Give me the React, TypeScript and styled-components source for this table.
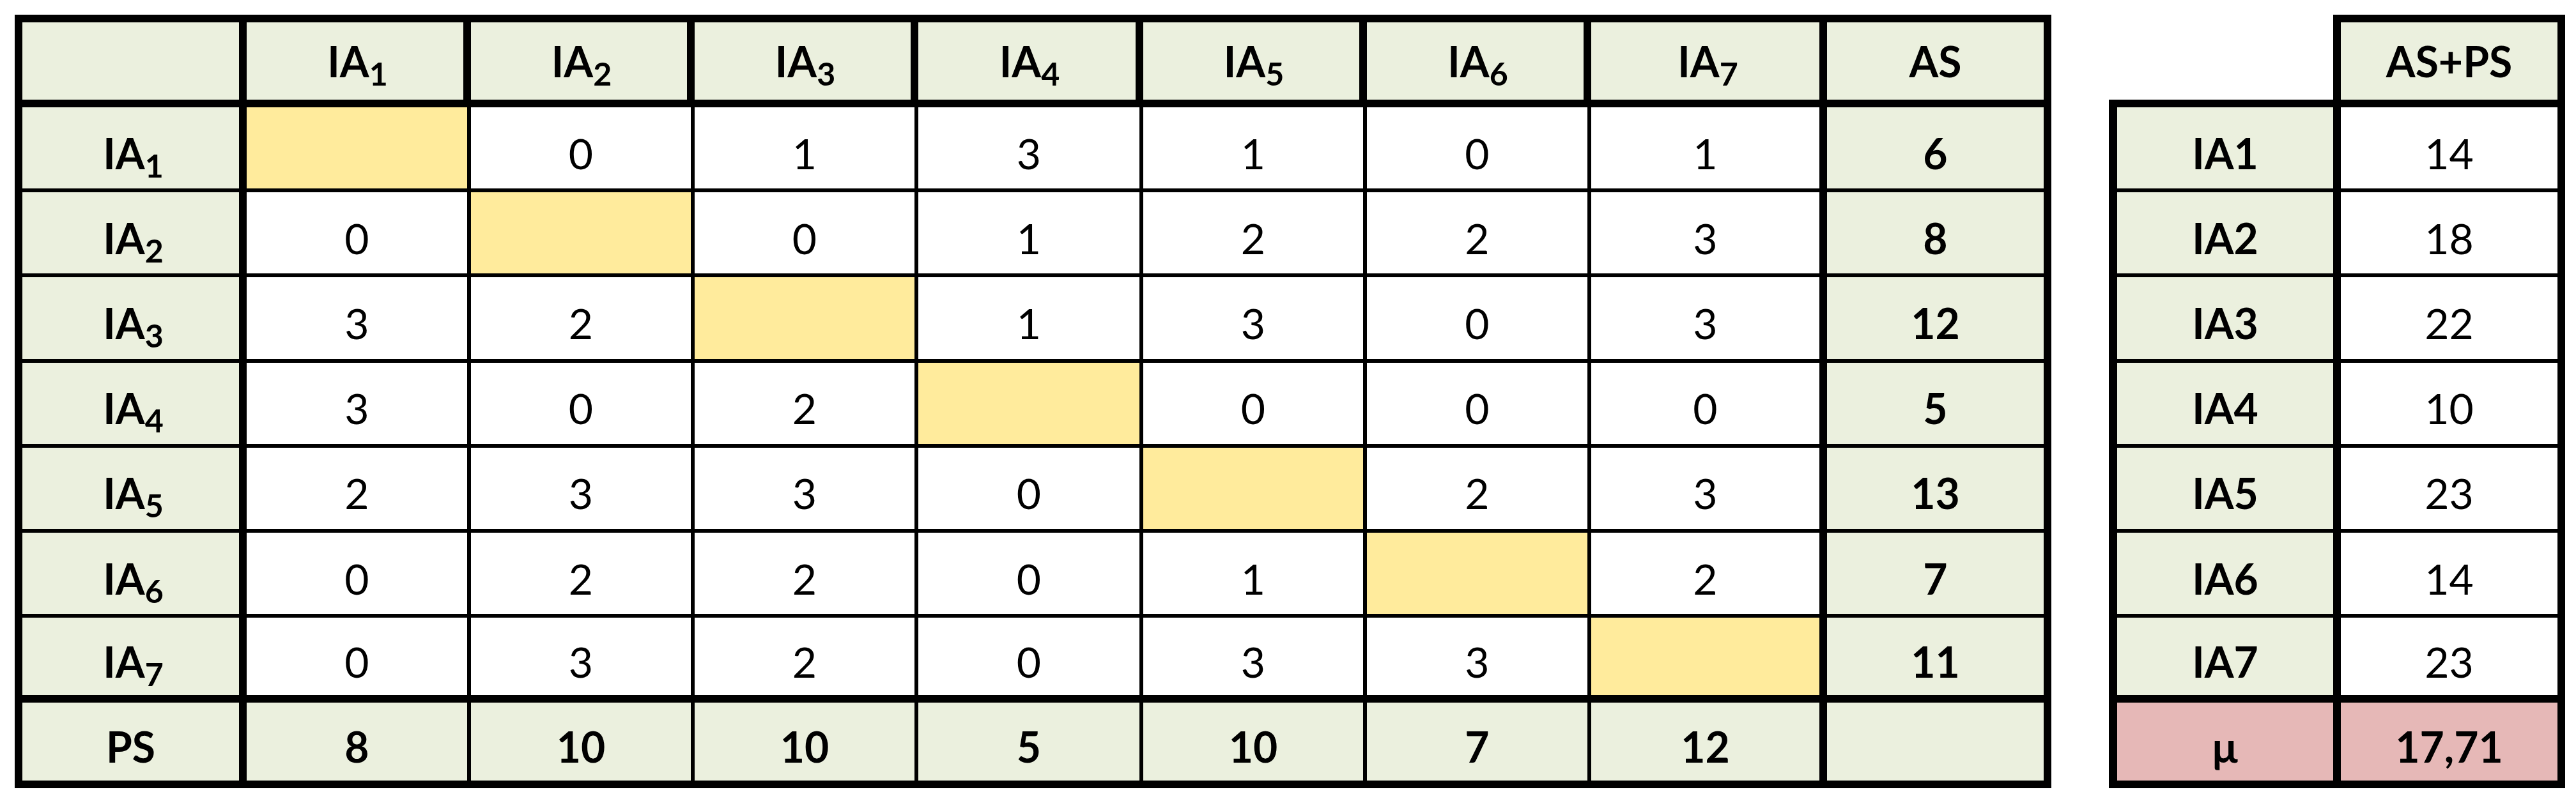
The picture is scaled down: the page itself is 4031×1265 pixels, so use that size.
import React from 'react';
import styled, { createGlobalStyle } from 'styled-components';

const GlobalStyle = createGlobalStyle`
  html, body {
    margin: 0;
    padding: 0;
    background: #ffffff;
  }
  body {
    font-family: Lato, "Liberation Sans", sans-serif;
    color: #000000;
  }
`;

type Tone = 'head' | 'plain' | 'diag' | 'mean' | 'blank';

const toneColor: Record<Tone, string> = {
  head: '#EBF0DE',
  plain: '#FFFFFF',
  diag: '#FFEB9C',
  mean: '#E6B8B7',
  blank: '#FFFFFF',
};

const THICK = 12;
const THIN = 6;

interface CellProps {
  $tone: Tone;
  $bold?: boolean;
  $head?: boolean;
  $t?: number;
  $r?: number;
  $b?: number;
  $l?: number;
}

const Page = styled.div`
  display: flex;
  align-items: flex-start;
  gap: 90px;
  padding: 23px 0 0 23px;
`;

const Sheet = styled.div`
  display: grid;
  grid-template-columns: 363px 351px 350px 350px 352px 350px 351px 369px 351px;
  grid-template-rows: 145px repeat(8, 133.2px);
`;

const Summary = styled.div`
  display: grid;
  grid-template-columns: 363px 351px;
  grid-template-rows: 145px repeat(8, 133.2px);
`;

const Cell = styled.div<CellProps>`
  display: flex;
  align-items: center;
  justify-content: center;
  box-sizing: border-box;
  background: ${p => toneColor[p.$tone]};
  border-style: solid;
  border-color: #000000;
  border-width: ${p => `${p.$t ?? 0}px ${p.$r ?? 0}px ${p.$b ?? 0}px ${p.$l ?? 0}px`};
  padding-top: ${p => (p.$head ? 0 : 16)}px;
  font-size: 66px;
  line-height: 1;
  font-weight: ${p => (p.$bold ? 700 : 400)};
  white-space: nowrap;
`;

// keeps "IA" and its index in one inline run so the index can drop below
const Label = styled.span`
  display: inline-block;
  line-height: 1;
  padding-left: 8px;
`;

const Sub = styled.span`
  font-size: 0.76em;
  line-height: 0;
  vertical-align: -13px;
`;

const Agent = ({ n }: { n: number }) => (
  <Label>
    IA<Sub>{n}</Sub>
  </Label>
);

// influence matrix, null = diagonal
const matrix: (number | null)[][] = [
  [null, 0, 1, 3, 1, 0, 1],
  [0, null, 0, 1, 2, 2, 3],
  [3, 2, null, 1, 3, 0, 3],
  [3, 0, 2, null, 0, 0, 0],
  [2, 3, 3, 0, null, 2, 3],
  [0, 2, 2, 0, 1, null, 2],
  [0, 3, 2, 0, 3, 3, null],
];

const active = [6, 8, 12, 5, 13, 7, 11];
const passive = [8, 10, 10, 5, 10, 7, 12];
const totals = [14, 18, 22, 10, 23, 14, 23];

const App: React.FC = () => {
  const last = matrix.length - 1;

  return (
    <>
      <GlobalStyle />
      <Page>
        <Sheet>
          <Cell $tone="head" $head $t={THICK} $l={THICK} $r={THICK} $b={THICK} />
          {matrix.map((_, c) => (
            <Cell key={`h${c}`} $tone="head" $head $bold $t={THICK} $r={THICK} $b={THICK}>
              <Agent n={c + 1} />
            </Cell>
          ))}
          <Cell $tone="head" $head $bold $t={THICK} $r={THICK} $b={THICK}>
            AS
          </Cell>

          {matrix.map((row, r) => {
            const b = r === last ? THICK : THIN;
            return (
              <React.Fragment key={`r${r}`}>
                <Cell $tone="head" $bold $l={THICK} $r={THICK} $b={b}>
                  <Agent n={r + 1} />
                </Cell>
                {row.map((v, c) => (
                  <Cell
                    key={c}
                    $tone={v === null ? 'diag' : 'plain'}
                    $r={c === last ? THICK : THIN}
                    $b={b}
                  >
                    {v}
                  </Cell>
                ))}
                <Cell $tone="head" $bold $r={THICK} $b={b}>
                  {active[r]}
                </Cell>
              </React.Fragment>
            );
          })}

          <Cell $tone="head" $bold $l={THICK} $r={THICK} $b={THICK}>
            PS
          </Cell>
          {passive.map((v, c) => (
            <Cell key={`p${c}`} $tone="head" $bold $r={c === last ? THICK : THIN} $b={THICK}>
              {v}
            </Cell>
          ))}
          <Cell $tone="head" $r={THICK} $b={THICK} />
        </Sheet>

        <Summary>
          <Cell $tone="blank" $head $r={THICK} $b={THICK} />
          <Cell $tone="head" $head $bold $t={THICK} $r={THICK} $b={THICK}>
            AS+PS
          </Cell>
          {totals.map((v, i) => {
            const b = i === totals.length - 1 ? THICK : THIN;
            return (
              <React.Fragment key={`t${i}`}>
                <Cell $tone="head" $bold $l={13} $r={THICK} $b={b}>
                  IA{i + 1}
                </Cell>
                <Cell $tone="plain" $r={THICK} $b={b}>
                  {v}
                </Cell>
              </React.Fragment>
            );
          })}
          <Cell $tone="mean" $bold $l={13} $r={THICK} $b={THICK}>
            µ
          </Cell>
          <Cell $tone="mean" $bold $r={THICK} $b={THICK}>
            17,71
          </Cell>
        </Summary>
      </Page>
    </>
  );
};

export default App;
